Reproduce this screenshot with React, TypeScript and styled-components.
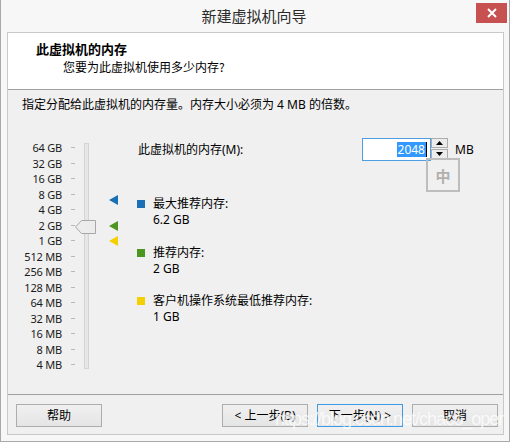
import React from "react";
import styled, { createGlobalStyle } from "styled-components";

const FONT = `"Noto Sans", "Noto Sans CJK SC", sans-serif`;

const Global = createGlobalStyle`
  html, body { margin: 0; padding: 0; background: #ffffff; }
  body { font-family: ${FONT}; font-size: 12px; color: #000; }
  * { box-sizing: border-box; }
`;

const Window = styled.div`
  position: relative;
  width: 510px;
  height: 442px;
  background: #f7f7f7;
  border: 1px solid #a9a9a9;
  border-top: none;
  display: flex;
  flex-direction: column;
`;

const TitleBar = styled.div`
  height: 32px;
  display: flex;
  align-items: flex-start;
  padding: 3px 2px 0 0;
`;

const Title = styled.div`
  flex: 1;
  text-align: center;
  padding-left: 31px;
  font-family: "Noto Sans CJK SC", sans-serif;
  font-size: 15px;
  line-height: 26px;
  color: #2b2b2b;
`;

const CloseButton = styled.div`
  width: 31px;
  height: 20px;
  background: #c75050;
  display: flex;
  align-items: center;
  justify-content: center;
`;

const Client = styled.div`
  flex: 1;
  margin: 0 5px 6px 6px;
  border: 1px solid #c9c9c9;
  background: #f0f0f0;
  display: flex;
  flex-direction: column;
`;

const Header = styled.div`
  height: 57px;
  background: #ffffff;
  border-bottom: 1px solid #a0a0a0;
  padding: 8px 0 0 28px;
`;

const Heading = styled.div`
  font-family: "Noto Sans CJK SC", sans-serif;
  font-weight: 700;
  font-size: 13px;
  line-height: 16px;
`;

const SubHeading = styled.div`
  margin: 2px 0 0 27px;
  font-family: "Noto Sans CJK SC", sans-serif;
  font-size: 12px;
  line-height: 16px;
`;

const Body = styled.div`
  flex: 1;
  padding-top: 7px;
`;

const Description = styled.div`
  padding-left: 14px;
  line-height: 16px;
  white-space: nowrap;
`;

const MainRow = styled.div`
  margin-top: 25px;
  display: flex;
  align-items: flex-start;
`;

const Scale = styled.div`
  position: relative;
  display: flex;
  align-items: flex-start;
  height: 232px;
`;

const LabelCol = styled.div`
  width: 54px;
  padding-top: 2px;
  display: flex;
  flex-direction: column;
`;

const ScaleLabel = styled.div`
  height: 15.5px;
  line-height: 15.5px;
  text-align: right;
  font-size: 11px;
  color: #1a1a1a;
  white-space: nowrap;
  letter-spacing: -0.2px;
`;

const TickCol = styled.div`
  width: 4px;
  margin-left: 9px;
  padding-top: 2px;
  display: flex;
  flex-direction: column;
`;

const Tick = styled.div`
  height: 15.5px;
  display: flex;
  align-items: center;
  &::after {
    content: "";
    display: block;
    width: 4px;
    height: 1px;
    background: #b8b8b8;
  }
`;

const Track = styled.div`
  margin: 5px 0 0 9px;
  width: 5px;
  height: 226px;
  background: #e6e6e6;
  border: 1px solid #d4d4d4;
`;

const Thumb = styled.svg`
  position: absolute;
  left: 67px;
  top: 82px;
`;

const MarkerCol = styled.div`
  position: relative;
  width: 9px;
  height: 232px;
  margin-left: 20px;
`;

const Marker = styled.svg`
  position: absolute;
  left: 0;
`;

const Info = styled.div`
  margin-left: 19px;
  display: flex;
  flex-direction: column;
`;

const MemRow = styled.div`
  display: flex;
  align-items: center;
  height: 23px;
`;

const MemLabel = styled.div`
  width: 225px;
  padding-left: 1px;
  line-height: 16px;
`;

const InputGroup = styled.div`
  position: relative;
  display: flex;
  align-items: flex-start;
  height: 23px;
`;

const NumberBox = styled.div`
  width: 69px;
  height: 23px;
  border: 1px solid #4e9ee6;
  background: #ffffff;
  display: flex;
  align-items: center;
  justify-content: flex-end;
  padding-right: 3px;
`;

const Selected = styled.span`
  background: #3399ff;
  color: #ffffff;
  line-height: 15px;
  padding: 0 1px;
  font-size: 12px;
`;

const Caret = styled.span`
  width: 1px;
  height: 15px;
  background: #000;
`;

const Spin = styled.div`
  width: 17px;
  display: flex;
  flex-direction: column;
  gap: 1px;
`;

const SpinButton = styled.div`
  height: 10px;
  border: 1px solid #acacac;
  background: #ececec;
  display: flex;
  align-items: center;
  justify-content: center;
`;

const Unit = styled.div`
  margin-left: 7px;
  line-height: 23px;
`;

const Ime = styled.div`
  position: absolute;
  left: 64px;
  top: 20px;
  width: 34px;
  height: 34px;
  border: 2px solid #bdbdbd;
  display: flex;
  align-items: center;
  justify-content: center;
  font-family: "Noto Sans CJK SC", sans-serif;
  font-weight: 700;
  font-size: 15px;
  color: #b0b0b0;
`;

const Legend = styled.div`
  margin-top: 35px;
  display: flex;
  flex-direction: column;
  gap: 16.5px;
`;

const LegendItem = styled.div`
  display: flex;
  align-items: flex-start;
  gap: 8px;
`;

const Swatch = styled.div<{ $color: string }>`
  width: 8px;
  height: 8px;
  margin-top: 4px;
  background: ${(p) => p.$color};
`;

const LegendText = styled.div`
  line-height: 16px;
  display: flex;
  flex-direction: column;
`;

const Footer = styled.div`
  height: 40px;
  border-top: 1px solid #a0a0a0;
  padding: 9px 5px 0 8px;
  display: flex;
  align-items: flex-start;
`;

const Button = styled.div<{ $default?: boolean }>`
  width: 86px;
  height: 23px;
  border: 1px solid ${(p) => (p.$default ? "#3c9be8" : "#adadad")};
  background: linear-gradient(#f0f0f0, #e5e5e5);
  display: flex;
  align-items: center;
  justify-content: center;
  font-size: 12px;
  line-height: 16px;
  white-space: nowrap;
`;

const Spacer = styled.div`
  flex: 1;
`;

const ButtonGroup = styled.div`
  display: flex;
  gap: 9px;
`;

const Watermark = styled.div`
  position: absolute;
  left: 274px;
  top: 409px;
  font-family: "Liberation Sans", Arial, sans-serif;
  font-size: 18px;
  letter-spacing: -1px;
  color: rgba(255, 255, 255, 0.75);
  pointer-events: none;
  white-space: nowrap;
`;

const labels = [
  "64 GB", "32 GB", "16 GB", "8 GB", "4 GB", "2 GB", "1 GB",
  "512 MB", "256 MB", "128 MB", "64 MB", "32 MB", "16 MB", "8 MB", "4 MB",
];

// position along the log scale (64 GB at top), in px relative to the scale top
const STEP = 15.5;
const posFor = (gb: number) => 10 + Math.log2(64 / gb) * STEP;

const markers = [
  { gb: 6.2, color: "#1a6fb5" },
  { gb: 2, color: "#4c961f" },
  { gb: 1, color: "#f5d000" },
];

export default function App() {
  return (
    <>
      <Global />
      <Window>
        <TitleBar>
          <Title>新建虚拟机向导</Title>
          <CloseButton>
            <svg width="10" height="10" viewBox="0 0 10 10">
              <path d="M1 1 L9 9 M9 1 L1 9" stroke="#fff" strokeWidth="2" />
            </svg>
          </CloseButton>
        </TitleBar>
        <Client>
          <Header>
            <Heading>此虚拟机的内存</Heading>
            <SubHeading>您要为此虚拟机使用多少内存?</SubHeading>
          </Header>
          <Body>
            <Description>指定分配给此虚拟机的内存量。内存大小必须为 4 MB 的倍数。</Description>
            <MainRow>
              <Scale>
                <LabelCol>
                  {labels.map((l) => (
                    <ScaleLabel key={l}>{l}</ScaleLabel>
                  ))}
                </LabelCol>
                <TickCol>
                  {labels.map((l) => (
                    <Tick key={l} />
                  ))}
                </TickCol>
                <Track />
                <Thumb width="21" height="14" viewBox="0 0 21 14">
                  <path
                    d="M0.5 7 L6.5 0.5 L20.5 0.5 L20.5 13.5 L6.5 13.5 Z"
                    fill="#ececec"
                    stroke="#a8a8a8"
                  />
                </Thumb>
              </Scale>
              <MarkerCol>
                {markers.map((m) => (
                  <Marker
                    key={m.gb}
                    width="9"
                    height="10"
                    viewBox="0 0 9 10"
                    style={{ top: posFor(m.gb) - 5 }}
                  >
                    <path d="M0 5 L9 0 L9 10 Z" fill={m.color} />
                  </Marker>
                ))}
              </MarkerCol>
              <Info>
                <MemRow>
                  <MemLabel>此虚拟机的内存(M):</MemLabel>
                  <InputGroup>
                    <NumberBox>
                      <Selected>2048</Selected>
                      <Caret />
                    </NumberBox>
                    <Spin>
                      <SpinButton>
                        <svg width="7" height="4" viewBox="0 0 7 4">
                          <path d="M3.5 0 L7 4 L0 4 Z" fill="#000" />
                        </svg>
                      </SpinButton>
                      <SpinButton>
                        <svg width="7" height="4" viewBox="0 0 7 4">
                          <path d="M0 0 L7 0 L3.5 4 Z" fill="#000" />
                        </svg>
                      </SpinButton>
                    </Spin>
                    <Unit>MB</Unit>
                    <Ime>中</Ime>
                  </InputGroup>
                </MemRow>
                <Legend>
                  <LegendItem>
                    <Swatch $color="#1a6fb5" />
                    <LegendText>
                      <span>最大推荐内存:</span>
                      <span>6.2 GB</span>
                    </LegendText>
                  </LegendItem>
                  <LegendItem>
                    <Swatch $color="#4c961f" />
                    <LegendText>
                      <span>推荐内存:</span>
                      <span>2 GB</span>
                    </LegendText>
                  </LegendItem>
                  <LegendItem>
                    <Swatch $color="#f5d000" />
                    <LegendText>
                      <span>客户机操作系统最低推荐内存:</span>
                      <span>1 GB</span>
                    </LegendText>
                  </LegendItem>
                </Legend>
              </Info>
            </MainRow>
          </Body>
          <Footer>
            <Button>帮助</Button>
            <Spacer />
            <ButtonGroup>
              <Button>&lt; 上一步(B)</Button>
              <Button $default>下一步(N) &gt;</Button>
              <Button>取消</Button>
            </ButtonGroup>
          </Footer>
        </Client>
        <Watermark>https://blog.csdn.net/chaos_oper</Watermark>
      </Window>
    </>
  );
}
